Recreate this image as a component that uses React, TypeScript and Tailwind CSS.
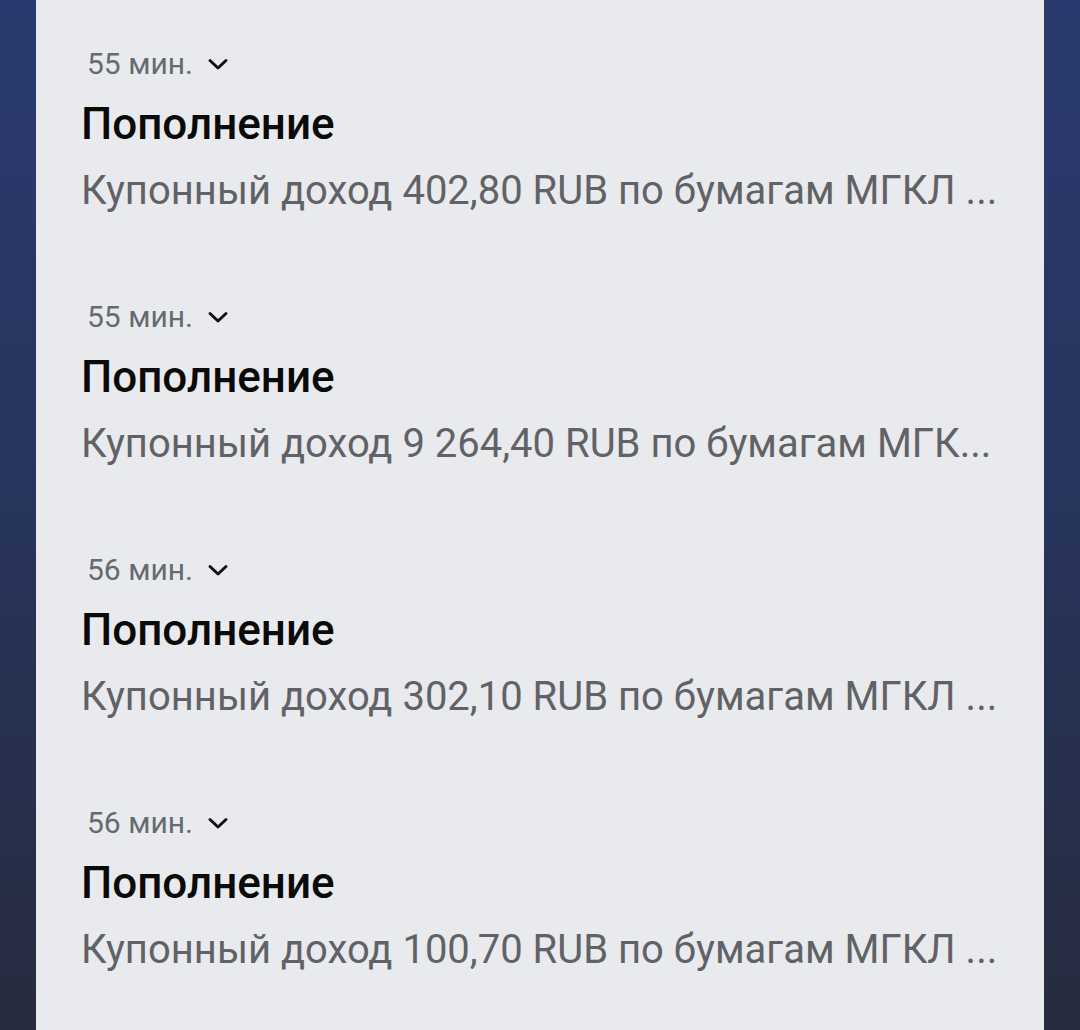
import React from 'react'

const ITEMS = [
  { time: '55 мин.', text: 'Купонный доход 402,80 RUB по бумагам МГКЛ ...' },
  { time: '55 мин.', text: 'Купонный доход 9 264,40 RUB по бумагам МГК...' },
  { time: '56 мин.', text: 'Купонный доход 302,10 RUB по бумагам МГКЛ ...' },
  { time: '56 мин.', text: 'Купонный доход 100,70 RUB по бумагам МГКЛ ...' },
]

const Chevron: React.FC = () => (
  <svg width="22" height="14" viewBox="0 0 22 14" className="text-[#111]">
    <path d="M3 3.5 L11 11 L19 3.5" fill="none" stroke="currentColor" strokeWidth="3" strokeLinecap="round" strokeLinejoin="round" />
  </svg>
)

export default function App() {
  return (
    <div className="w-[1080px] h-[1030px] overflow-hidden flex bg-gradient-to-b from-[#2a3a6e] via-[#27345c] to-[#262b3e]" style={{ fontFamily: 'Roboto, "Noto Sans", sans-serif' }}>
      <div className="w-[36px] flex-shrink-0" />
      <div className="flex-1 bg-[#e9eaee] flex flex-col pl-[45px] pt-[44px]">
        {ITEMS.map((item, i) => (
          <div key={i} className="flex flex-col mb-[80px]">
            <div className="flex items-center h-[40px] pl-[6px] gap-[14px]">
              <span className="text-[30px] leading-[40px] text-[#666a70]">{item.time}</span>
              <Chevron />
            </div>
            <div className="mt-[12px] text-[44px] leading-[56px] font-medium text-[#0a0a0a]">Пополнение</div>
            <div className="mt-[13px] text-[40px] leading-[52px] text-[#616266] whitespace-nowrap">{item.text}</div>
          </div>
        ))}
      </div>
      <div className="w-[36px] flex-shrink-0" />
    </div>
  )
}
